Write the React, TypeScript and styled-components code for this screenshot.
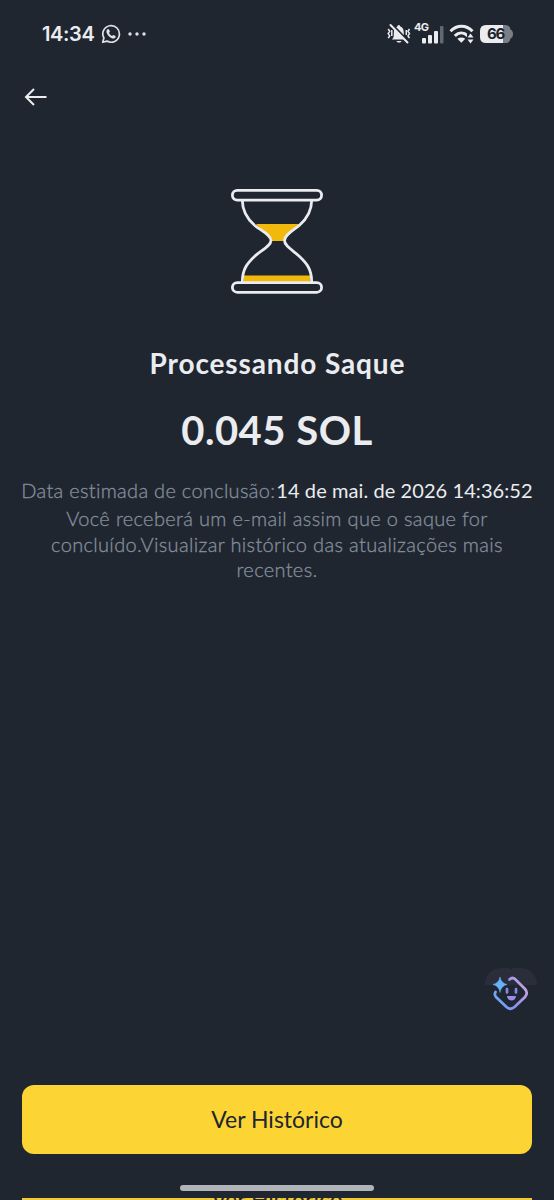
import React from "react";
import styled, { createGlobalStyle } from "styled-components";

const GlobalStyle = createGlobalStyle`
  * { box-sizing: border-box; }
  body { margin: 0; background: #202630; font-family: Lato, sans-serif; }
`;

const Screen = styled.main`
  position: relative;
  display: flex;
  flex-direction: column;
  width: 554px;
  height: 1200px;
  overflow: hidden;
  background: #202630;
  color: #eaecef;
`;

const StatusBar = styled.header`
  display: flex;
  align-items: center;
  justify-content: space-between;
  height: 68px;
  padding: 0 40px 0 42px;
  flex: none;
`;

const StatusLeft = styled.div`
  display: flex;
  align-items: center;
  gap: 7px;
`;

const Clock = styled.span`
  width: 52px;
  font: 600 20px/24px Inter, sans-serif;
  letter-spacing: -0.35px;
  white-space: nowrap;
`;

const StatusRight = styled.div`
  display: flex;
  align-items: center;
`;

const Network = styled.div`
  position: relative;
  width: 30px;
  height: 24px;
  margin-left: 3px;
`;

const NetworkLabel = styled.span`
  position: absolute;
  left: 0;
  top: -1px;
  font: 700 11px/12px Inter, sans-serif;
  letter-spacing: -0.6px;
`;

const Battery = styled.div`
  position: relative;
  display: flex;
  width: 34px;
  height: 20px;
  margin-left: 5px;
`;

const BatteryLevel = styled.span`
  position: absolute;
  left: 7px;
  top: 0;
  font: 700 15px/20px Inter, sans-serif;
  letter-spacing: -1.2px;
  color: #1c222c;
`;

const NavBar = styled.nav`
  display: flex;
  align-items: center;
  height: 58px;
  padding-left: 24px;
  flex: none;
`;

const BackButton = styled.button`
  display: flex;
  padding: 0;
  border: 0;
  background: none;
  color: #eaecef;
`;

const Content = styled.section`
  display: flex;
  flex-direction: column;
  align-items: center;
  padding-top: 60px;
  flex: 1;
`;

const Title = styled.h1`
  margin: 49px 0 0;
  font-size: 28px;
  line-height: 40px;
  font-weight: 700;
  letter-spacing: 0.88px;
  margin-right: -0.88px;
`;

const Amount = styled.p`
  margin: 21px 0 0;
  font-size: 40px;
  line-height: 52px;
  font-weight: 700;
  letter-spacing: 0.5px;
`;

const Estimate = styled.p`
  display: flex;
  margin: 19px 0 0;
  font-size: 20px;
  line-height: 30px;
  color: #848e9c;
  white-space: nowrap;
`;

const EstimateLabel = styled.span`
  width: 255px;
  font-weight: 300;
  letter-spacing: 0.3px;
  -webkit-text-stroke: 0.3px currentColor;
`;

const EstimateDate = styled.span`
  color: #eaecef;
  letter-spacing: 0.08px;
`;

const Note = styled.p`
  margin: 1px 0 0;
  font-size: 20px;
  font-weight: 300;
  line-height: 25.5px;
  letter-spacing: 0.34px;
  -webkit-text-stroke: 0.3px currentColor;
  color: #848e9c;
  text-align: center;
  white-space: pre-line;
`;

const Footer = styled.footer`
  display: flex;
  flex-direction: column;
  align-items: center;
  height: 115px;
  padding: 0 22px;
  flex: none;
`;

const PrimaryButton = styled.button`
  width: 100%;
  height: 69px;
  flex: none;
  padding: 0;
  border: 0;
  border-radius: 12px;
  background: #fcd535;
  color: #202630;
  font: 400 23px/69px Lato, sans-serif;
  letter-spacing: 0;
`;

const HomeIndicator = styled.div`
  width: 194px;
  height: 6px;
  margin-top: 31px;
  flex: none;
  border-radius: 3px;
  background: #b0b4b8;
`;

const NextButton = styled.div`
  display: flex;
  align-items: center;
  justify-content: center;
  width: 100%;
  height: 2px;
  margin-top: 7px;
  flex: none;
  background: #f0cb35;
  color: #202630;
  font-size: 23px;
  line-height: 30px;
`;

const AssistantButton = styled.button`
  position: absolute;
  left: 484px;
  top: 966px;
  display: flex;
  padding: 0;
  border: 0;
  background: none;
`;

function WhatsAppIcon() {
  return (
    <svg width="20" height="20" viewBox="0 0 20 20" fill="none" stroke="#dfe2e7" strokeWidth="1.7">
      <path d="M1.7 18.3 2.9 14A8.3 8.3 0 1 1 6 17.1Z" strokeLinejoin="round" />
      <path d="M6.3 5.3h1.6l1 2.3-.9 1.3c.6 1.3 1.6 2.3 3 3l1.3-1 2.2 1.1v1.4c-.7 1-2 1.4-3.2 1C8.7 13.5 6.500 11.200 5.600 8.700c-.4-1.300 0-2.600.7-3.400Z" fill="#dfe2e7" stroke="none" />
    </svg>
  );
}

function MoreIcon() {
  return (
    <svg width="18" height="4" viewBox="0 0 18 4" fill="#dfe2e7">
      <circle cx="2" cy="2" r="1.700" /><circle cx="9" cy="2" r="1.700" /><circle cx="16" cy="2" r="1.700" />
    </svg>
  );
}

function MutedIcon() {
  return (
    <svg width="24" height="22" viewBox="0 0 24 22" fill="none" stroke="#eaecef">
      <path d="M4.800 16.500c2-1.500 2-3 2-6.500 0-4 1.500-6 3.500-6.500a1.500 1.500 0 0 1 3 0c2.200.5 3.500 2.500 3.500 6.500 0 3.500.5 5 2 6.500Z" fill="#eaecef" stroke="none" />
      <path d="M9.500 18h5c-.7 2-4.300 2-5 0Z" fill="#eaecef" stroke="none" />
      <path d="M5 1.500 22 19" stroke="#202630" strokeWidth="2.500" />
      <path d="M3.500 2 20.500 19.500" strokeWidth="2" strokeLinecap="round" />
      <path d="m1.200 6 1.500 2.300-1.500 2.300 1.500 2.300-1.500 2.300M4.800 7v6M22.500 6 21 8.300l1.500 2.300-1.500 2.300 1.500 2.300M19.300 7v5" strokeWidth="1.500" />
    </svg>
  );
}

function SignalIcon() {
  return (
    <svg width="30" height="24" viewBox="0 0 30 24" fill="#eaecef">
      <rect x="8" y="16" width="4" height="5.500" rx="1" /><rect x="14" y="13" width="4" height="8.500" rx="1" />
      <rect x="20" y="9" width="4" height="12.500" rx="1" /><rect x="26" y="4" width="3.500" height="17.500" rx="1" fill="#626871" />
    </svg>
  );
}

const WifiDrawing = styled.svg`
  margin-left: 5px;
`;

function WifiIcon() {
  return (
    <WifiDrawing width="26" height="20" viewBox="0 0 26 20" fill="none" stroke="#eaecef" strokeWidth="3">
      <path d="M1.500 7.300C8 .7 17 .7 23.500 7.300" /><path d="M5.800 11.800c4-3.800 9-3.800 13 0" />
      <path d="M8.300 14.800q4.200-2.800 8 0l-4 4Z" fill="#eaecef" stroke="none" />
      <path d="M21.500 9v11" stroke="#202630" strokeWidth="7" />
      <path d="m21.500 9.500 3 4h-6Zm0 10-3-4h6Z" fill="#eaecef" stroke="none" />
    </WifiDrawing>
  );
}

function HourglassIcon() {
  return (
    <svg width="94" height="108" viewBox="0 0 94 108" fill="none" stroke="#eaecef" strokeWidth="2.800">
      <path d="M26 38h44c-4 6-15 9-16 17H41C38 47 31 44 26 38Z" fill="#f0b90b" stroke="none" />
      <path d="M14 89.500h66V97H14Z" fill="#f0b90b" stroke="none" />
      <path d="M12.300 14c0 12 5 19 12.500 25.500C31 44.500 41 49 41 54.500S31 64.500 25 70C17.500 77 12.300 83 12.300 96M81.700 14c0 12-5 19-12.500 25.500C63 44.500 54.500 49 54.500 54.500S63 64.500 69 70c7.500 7 12.700 13 12.700 26" />
      <rect x="2.400" y="4.400" width="89.200" height="9.700" rx="4.850" fill="#202630" />
      <rect x="2.400" y="96.600" width="89.200" height="9.700" rx="4.850" fill="#202630" />
    </svg>
  );
}

function AssistantIcon() {
  return (
    <svg width="54" height="48" viewBox="0 0 54 48" fill="none">
      <defs>
        <linearGradient id="assistant" x1="10" y1="35" x2="44" y2="18" gradientUnits="userSpaceOnUse">
          <stop stopColor="#68a9f8" /><stop offset=".5" stopColor="#9290ef" /><stop offset="1" stopColor="#d0a7dc" />
        </linearGradient>
      </defs>
      <path d="M1 18C1 9 8 2 18 2h7l2 2 2-2h7c10 0 17 7 17 16 0 1-1 1-2 1H3c-1 0-2 0-2-1Z" fill="#2a2e3b" />
      <path d="M25.500 13.500c2-2 4-2 6 0L41 23q3.500 4 0 8L30.500 41q-4 3.500-8 0L12 31q-2-2.500-.5-5" stroke="url(#assistant)" strokeWidth="2.700" strokeLinecap="round" />
      <path d="M16 11q1 6 7 7.500Q17 20 16 26.500 15 20 9 18.500 15 17 16 11Z" fill="#67b0fa" stroke="#67b0fa" strokeWidth=".5" />
      <path d="M23 23v3.500M32 23v3.500" stroke="#8188e9" strokeWidth="2.700" strokeLinecap="round" />
      <path d="M23 30h9c-.5 6-8.500 6-9 0Z" fill="#9b8df0" />
    </svg>
  );
}

export default function App() {
  return (
    <Screen>
      <GlobalStyle />
      <StatusBar>
        <StatusLeft><Clock>14:34</Clock><WhatsAppIcon /><MoreIcon /></StatusLeft>
        <StatusRight>
          <MutedIcon />
          <Network><SignalIcon /><NetworkLabel>4G</NetworkLabel></Network>
          <WifiIcon />
          <Battery>
            <svg width="34" height="20" viewBox="0 0 34 20">
              <path d="M6 1h18v18H6q-6 0-6-6V7q0-6 6-6Z" fill="#eaecef" />
              <path d="M23 1h2q5 0 5.500 4.500 2.500 1 2.500 4.500t-2.500 4.500Q30 19 25 19h-2Z" fill="#7a7f87" />
            </svg>
            <BatteryLevel>66</BatteryLevel>
          </Battery>
        </StatusRight>
      </StatusBar>
      <NavBar>
        <BackButton aria-label="Voltar">
          <svg width="24" height="20" viewBox="0 0 24 20" fill="none" stroke="currentColor" strokeWidth="2">
            <path d="M10 2 2 10l8 8M2 10h20.500" />
          </svg>
        </BackButton>
      </NavBar>
      <Content>
        <HourglassIcon />
        <Title>Processando Saque</Title>
        <Amount>0.045 SOL</Amount>
        <Estimate>
          <EstimateLabel>Data estimada de conclusão:</EstimateLabel>
          <EstimateDate>14 de mai. de 2026 14:36:52</EstimateDate>
        </Estimate>
        <Note>{"Você receberá um e-mail assim que o saque for\nconcluído.Visualizar histórico das atualizações mais\nrecentes."}</Note>
      </Content>
      <Footer>
        <PrimaryButton>Ver Histórico</PrimaryButton>
        <HomeIndicator />
        <NextButton>Ver Histórico</NextButton>
      </Footer>
      <AssistantButton aria-label="Assistente"><AssistantIcon /></AssistantButton>
    </Screen>
  );
}
